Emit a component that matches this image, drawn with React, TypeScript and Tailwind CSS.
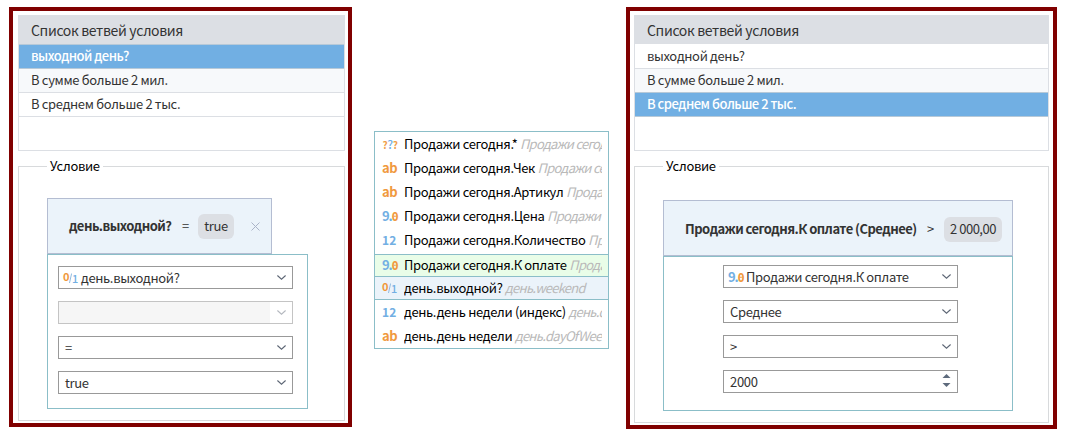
import React from 'react';

type IconKind = 'any' | 'text' | 'float' | 'int' | 'bool';

function TypeIcon({ kind }: { kind: IconKind }) {
  if (kind === 'any')
    return (
      <span className="flex w-4 shrink-0 items-center justify-center text-[10px] leading-3 font-bold tracking-[-0.4px] text-[#f0a04b]">
        <span className="pt-px">?</span>
        <span className="pb-px text-[12px] font-medium text-[#72afe3]">?</span>
        <span className="pt-px">?</span>
      </span>
    );
  if (kind === 'text')
    return <span className="w-4 shrink-0 text-[13px] leading-4 font-bold tracking-[-0.4px] text-[#f0993e]">ab</span>;
  if (kind === 'float')
    return (
      <span className="flex w-4 shrink-0 items-center text-[13px] leading-4 font-bold tracking-[-1.2px] whitespace-nowrap text-[#72afe3]">
        <span>9.</span>
        <span className="pt-0.5 font-['DejaVu_Sans_Mono',monospace] text-[12px] leading-[14px] text-[#f0993e]">0</span>
      </span>
    );
  if (kind === 'int')
    return <span className="w-4 shrink-0 text-[12px] leading-4 font-bold tracking-[0.2px] text-[#72afe3]">12</span>;
  return (
    <span className="flex w-4 shrink-0 items-center text-[11px] leading-3 tracking-[-0.4px] text-[#72afe3]">
      <span className="pb-1 font-bold text-[#f0993e]">0</span>
      <svg className="h-3 w-[3px]" viewBox="0 0 3 12" fill="none" stroke="#90bbdf">
        <path d="M2.6 1.5.5 11" />
      </svg>
      <span className="font-medium">1</span>
    </span>
  );
}

function Chevron({ faded }: { faded?: boolean }) {
  return (
    <svg className="h-[5px] w-[9px]" viewBox="0 0 9 5" fill="none" stroke={faded ? '#b4b8bf' : '#5d6675'} strokeWidth="1.1">
      <path d="M.4.5 4.5 4.2 8.6.5" />
    </svg>
  );
}

function Spinner() {
  return (
    <svg className="mb-0.5 h-[13px] w-[9px]" viewBox="0 0 9 13" fill="#5d6a7c">
      <path d="M.5 4 4.5 0l4 4zM.5 9l4 4 4-4z" />
    </svg>
  );
}

interface FieldProps {
  value?: string;
  icon?: IconKind;
  disabled?: boolean;
  numeric?: boolean;
}

function Field({ value, icon, disabled, numeric }: FieldProps) {
  return (
    <div className={`flex h-[23px] w-[235px] border ${disabled ? 'border-[#c4c4c4]' : 'border-[#999999]'}`}>
      <div
        className={`flex min-w-0 flex-1 items-center whitespace-nowrap ${disabled ? 'bg-[#f6f6f6]' : ''} ${icon ? 'gap-0.5 pl-1' : 'pl-1.5'}`}
      >
        {icon && <TypeIcon kind={icon} />}
        <span>{value}</span>
      </div>
      <div className="flex w-[22px] items-center justify-center">{numeric ? <Spinner /> : <Chevron faded={disabled} />}</div>
    </div>
  );
}

const branches = ['выходной день?', 'В сумме больше 2 мил.', 'В среднем больше 2 тыс.'];

function BranchTable({ selected }: { selected: number }) {
  return (
    <div className="h-[136px] border border-[#dcdfe4]">
      <div
        className={`flex h-[29px] items-center border-b bg-[#dcdfe4] pl-3 text-[14px] ${selected === 0 ? 'border-[#b7c9d8]' : 'border-white'}`}
      >
        Список ветвей условия
      </div>
      {branches.map((name, i) => (
        <div
          key={name}
          className={`flex h-[24px] items-center border-b pb-0.5 pl-3 ${
            i === selected
              ? 'border-[#b7c9d8] bg-[#71afe3] font-medium tracking-[-0.5px] text-white'
              : i === 1
                ? `bg-[#f7f9fb] ${selected === 2 ? 'border-[#b7c9d8]' : 'border-[#dcdfe4]'}`
                : 'border-[#dcdfe4]'
          }`}
        >
          {name}
        </div>
      ))}
    </div>
  );
}

function Legend() {
  return <legend className="ml-[28px] h-5 pr-[3px] pl-[3px] leading-5 text-black">Условие</legend>;
}

interface Suggestion {
  icon: IconKind;
  label: string;
  hint: string;
}

const suggestions: Suggestion[] = [
  { icon: 'any', label: 'Продажи сегодня.*', hint: 'Продажи сегодня' },
  { icon: 'text', label: 'Продажи сегодня.Чек', hint: 'Продажи сегодня' },
  { icon: 'text', label: 'Продажи сегодня.Артикул', hint: 'Продажи сегодня' },
  { icon: 'float', label: 'Продажи сегодня.Цена', hint: 'Продажи сегодня' },
  { icon: 'int', label: 'Продажи сегодня.Количество', hint: 'Продажи сегодня' },
  { icon: 'float', label: 'Продажи сегодня.К оплате', hint: 'Продажи сегодня' },
  { icon: 'bool', label: 'день.выходной?', hint: 'день.weekend' },
  { icon: 'int', label: 'день.день недели (индекс)', hint: 'день.dayOfWeekIndex' },
  { icon: 'text', label: 'день.день недели', hint: 'день.dayOfWeekName' },
];

function SuggestionList() {
  return (
    <div className="mt-[131px] ml-[22px] h-[218px] w-[235px] border border-[#8bbec8] text-black">
      {suggestions.map(({ icon, label, hint }, i) => (
        <div
          key={label}
          className={`flex items-center gap-1.5 pr-1.5 pl-[7px] ${
            i === 5
              ? 'mt-0.5 h-[22px] border-t border-[#8bbec8] bg-[#e9fde8] pb-0.5'
              : i === 6
                ? 'h-[24px] border-y border-[#8bbec8] bg-[#ebf3fa]'
                : 'h-[24px]'
          }`}
        >
          <TypeIcon kind={icon} />
          <span className="min-w-0 flex-1 overflow-hidden whitespace-nowrap">
            {label} <i className="tracking-[-0.75px] text-[#b9b9b9]">{hint}</i>
          </span>
        </div>
      ))}
    </div>
  );
}

export default function App() {
  return (
    <main className="flex h-[430px] w-[1071px] items-start overflow-hidden bg-white font-['Noto_Sans_CJK_SC','Noto_Sans',sans-serif] text-[13px] tracking-[-0.34px] text-[#333333]">
      <section className="mt-[7px] ml-[9px] h-[420px] w-[343px] border-4 border-[#800000] pt-1 pr-[3px] pl-[5px]">
        <BranchTable selected={0} />
        <fieldset className="mt-[5px] h-[265px] border border-[#d8dadc]">
          <Legend />
          <div className="mt-[22px] ml-[28px] flex h-[56px] w-[225px] items-center border border-[#b4bdd2] bg-[#ebf3fa] whitespace-nowrap">
            <span className="w-[134px] shrink-0 pl-[21px] font-bold tracking-[-0.53px]">день.выходной?</span>
            <span className="w-4 shrink-0">=</span>
            <span className="flex h-[25px] w-9 shrink-0 items-center justify-center rounded-md bg-[#dcdfe4]">true</span>
            <svg className="ml-[17px] h-[9px] w-[9px] shrink-0" viewBox="0 0 9 9" stroke="#aab3c8">
              <path d="M.5.5l8 8M8.5.5l-8 8" />
            </svg>
          </div>
          <div className="ml-[28px] flex h-[155px] w-[261px] flex-col gap-3 border border-[#8bbec8] pt-[11px] pl-2.5">
            <Field icon="bool" value="день.выходной?" />
            <Field disabled />
            <Field value="=" />
            <Field value="true" />
          </div>
        </fieldset>
      </section>

      <SuggestionList />

      <section className="mt-[7px] ml-[17px] h-[422px] w-[431px] border-4 border-[#800000] pt-1 pr-1 pl-1">
        <BranchTable selected={2} />
        <fieldset className="mt-[5px] h-[267px] border border-[#d8dadc]">
          <Legend />
          <div className="mt-[24px] ml-[28px] flex h-[56px] w-[350px] items-center border border-[#b4bdd2] bg-[#ebf3fa] pt-0.5 whitespace-nowrap">
            <span className="w-[263px] shrink-0 pl-[21px] font-bold tracking-[-0.53px]">Продажи сегодня.К оплате (Среднее)</span>
            <span className="w-[17px] shrink-0">&gt;</span>
            <span className="flex h-[25px] w-[58px] shrink-0 items-center justify-center rounded-md bg-[#dcdfe4] tracking-[-0.5px]">2 000,00</span>
          </div>
          <div className="ml-[28px] flex h-[155px] w-[350px] flex-col items-start gap-3 border border-[#8bbec8] pt-2 pl-[59px]">
            <Field icon="float" value="Продажи сегодня.К оплате" />
            <Field value="Среднее" />
            <Field value=">" />
            <Field numeric value="2000" />
          </div>
        </fieldset>
      </section>
    </main>
  );
}
